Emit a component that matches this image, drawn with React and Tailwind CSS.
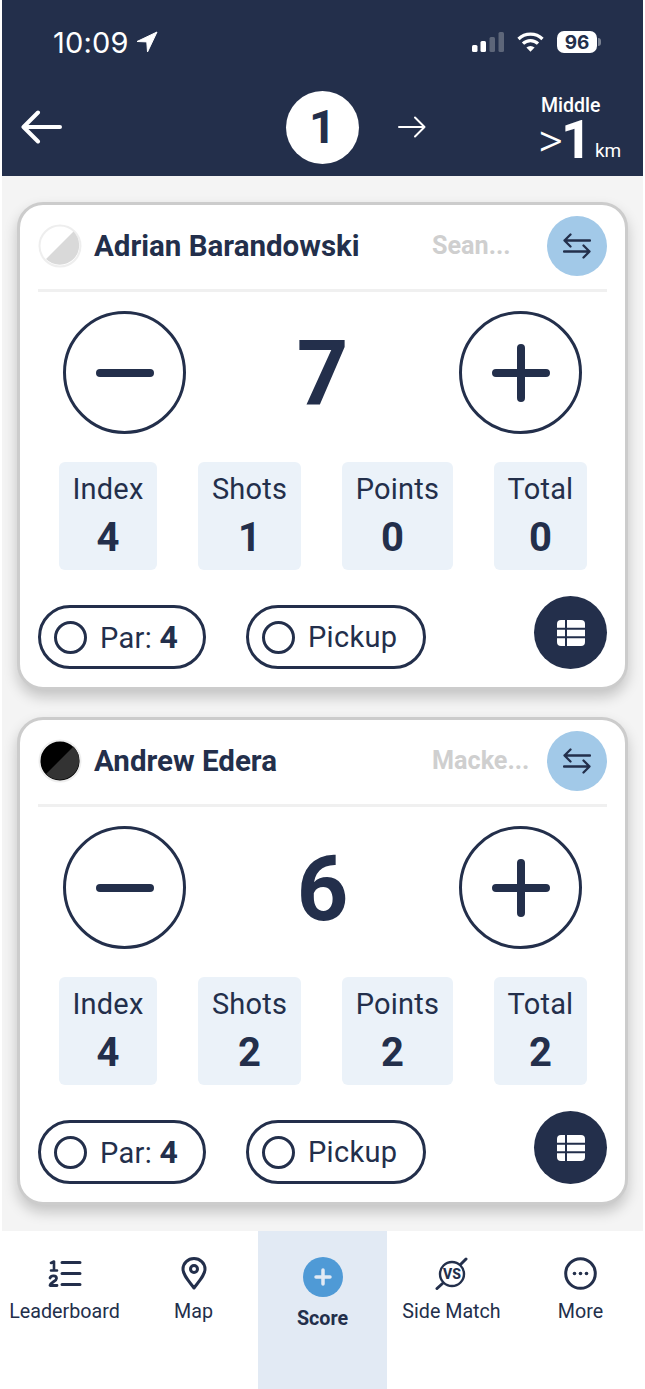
import { Plus } from "lucide-react"

function Stat({ label, value, w, shift }) {
  return (
    <div className={`${w} h-[108px] bg-[#ebf2f9] rounded-md flex flex-col items-center pt-[9px]`}>
      <span className="text-[29px] leading-[36px] tracking-[0.2px]">{label}</span>
      <span className={`text-[40px] leading-[44px] font-bold mt-[9px] ${shift ? "pr-[10px]" : ""}`}>{value}</span>
    </div>
  )
}

function Pill({ w, children }) {
  return (
    <div className={`${w} h-[64px] rounded-full border-[3px] border-[#232f4b] flex items-center pl-[13px]`}>
      <span className="w-[33px] h-[33px] rounded-full border-[3px] border-[#232f4b] shrink-0" />
      <span className="ml-[13px] text-[29px] leading-none tracking-[0.3px]">{children}</span>
    </div>
  )
}

function SwapIcon() {
  return (
    <svg width="28" height="26" viewBox="0 0 28 26" fill="none" stroke="#232f4b" strokeWidth="2.3" strokeLinecap="round" strokeLinejoin="round">
      <path d="M27 7.500H1.500M7.500 1.500l-6 6 6 6" />
      <path d="M1 18.500h25.500M20.500 12.500l6 6-6 6" />
    </svg>
  )
}

function TableIcon() {
  return (
    <svg width="30" height="28" viewBox="0 0 30 28" fill="none">
      <rect x="1" y="1" width="28" height="26" rx="4" fill="white" />
      <path d="M1 9.800h28M1 18.200h28M10 1v26" stroke="#232f4b" strokeWidth="2" />
    </svg>
  )
}

function PlayerCard({ name, tee, score, shots, points, total, dot }) {
  return (
    <div className="w-[611px] h-[488px] ml-[15px] bg-white rounded-[26px] border-[3px] border-[#cccccc] shadow-[0_7px_14px_rgba(0,0,0,0.2)] px-[18px] pt-[11px]">
      <div className="h-[60px] flex items-center">
        {dot}
        <span className="ml-[12px] flex-1 text-[29.500px] font-bold">{name}</span>
        <span className="w-[97px] text-[25.200px] font-bold text-[#cfcfcf]">{tee}</span>
        <button className="ml-[18px] w-[60px] h-[60px] rounded-full bg-[#a2c9e8] flex items-center justify-center">
          <SwapIcon />
        </button>
      </div>
      <div className="h-[3px] bg-[#f0f0f0] mt-[13px]" />
      <div className="mt-[19px] h-[123px] flex items-center px-[25px]">
        <div className="w-[123px] h-[123px] rounded-full border-[3px] border-[#232f4b] flex items-center justify-center">
          <svg width="60" height="60" viewBox="0 0 60 60" stroke="#232f4b" strokeWidth="8" strokeLinecap="round">
            <path d="M5 30h50" />
          </svg>
        </div>
        <div className="flex-1 text-center text-[90px] leading-none font-bold pt-[5px]">{score}</div>
        <div className="w-[123px] h-[123px] rounded-full border-[3px] border-[#232f4b] flex items-center justify-center">
          <svg width="60" height="60" viewBox="0 0 60 60" stroke="#232f4b" strokeWidth="8" strokeLinecap="round">
            <path d="M5 30h50M30 5v50" />
          </svg>
        </div>
      </div>
      <div className="mt-[28px] flex gap-[41px] pl-[21px]">
        <Stat label="Index" value="4" w="w-[98px]" />
        <Stat label="Shots" value={shots} w="w-[103px]" />
        <Stat label="Points" value={points} w="w-[111px]" shift />
        <Stat label="Total" value={total} w="w-[93px]" />
      </div>
      <div className="mt-[26px] flex items-end">
        <Pill w="w-[168px]">Par: <b className="text-[32px]">4</b></Pill>
        <div className="ml-[40px]"><Pill w="w-[180px]">Pickup</Pill></div>
        <button className="ml-auto w-[73px] h-[73px] rounded-full bg-[#232f4b] flex items-center justify-center">
          <TableIcon />
        </button>
      </div>
    </div>
  )
}

function Tab({ label, active, children }) {
  return (
    <div className={`w-[129px] pt-[26px] flex flex-col items-center ${active ? "bg-[#e2eaf4]" : ""}`}>
      <div className={`${active ? "h-[40px]" : "h-[33px]"} flex items-center justify-center`}>{children}</div>
      <span className={`mt-[10px] text-[19.700px] leading-[24px] ${active ? "font-bold" : ""}`}>{label}</span>
    </div>
  )
}

export default function App() {
  return (
    <div className="w-[645px] h-[1389px] bg-white text-[#232f4b] font-['Roboto',sans-serif] overflow-hidden">
      {/* header */}
      <header className="ml-[2px] w-[641px] h-[176px] bg-[#232f4b] text-white">
        <div className="h-[85px] pt-[27px] flex items-start">
          <div className="ml-[51px] flex items-center h-[30px]">
            <span className="text-[29px] font-['Inter',sans-serif] tracking-[0.2px] leading-none">10:09</span>
            <svg className="ml-[7px]" width="22" height="22" viewBox="0 0 22 22" fill="white" stroke="white" strokeWidth="1" strokeLinejoin="round">
              <path d="M21 1 1 10.500l9.800.4.7 10.100z" />
            </svg>
          </div>
          <div className="ml-auto mr-[42px] flex items-center h-[30px]">
            <svg width="32" height="20" viewBox="0 0 32 20">
              <rect x="0" y="13" width="5.500" height="7" rx="1.500" fill="white" />
              <rect x="8.500" y="9" width="5.500" height="11" rx="1.500" fill="white" />
              <rect x="17.500" y="5" width="5.500" height="15" rx="1.500" fill="#5d6679" />
              <rect x="26.500" y="0" width="5.500" height="20" rx="1.500" fill="#5d6679" />
            </svg>
            <svg className="ml-[13px]" width="27" height="20" viewBox="0 0 27 20" fill="none" stroke="white" strokeWidth="3.200">
              <path d="M1.500 7a17 17 0 0 1 24 0" />
              <path d="M6 11.700a10.500 10.500 0 0 1 15 0" />
              <path d="M13.500 19.800 9.400 15.500a6 6 0 0 1 8.200 0z" fill="white" stroke="none" />
            </svg>
            <span className="ml-[13px] w-[40px] h-[22px] rounded-[7px] bg-white text-[#232f4b] text-[19px] font-bold font-['Inter',sans-serif] flex items-center justify-center leading-none">96</span>
            <span className="ml-[1px] w-[3px] h-[8px] rounded-r-full bg-[#7a8292]" />
          </div>
        </div>
        <div className="h-[84px] flex items-center">
          <svg className="ml-[19px]" width="41" height="34" viewBox="0 0 41 34" fill="none" stroke="white" strokeWidth="4" strokeLinecap="round" strokeLinejoin="round">
            <path d="M39 17H3M17 2.500 2.500 17 17 31.500" />
          </svg>
          <div className="ml-[224px] w-[73px] h-[73px] rounded-full bg-white text-[#232f4b] text-[47px] font-bold flex items-center justify-center">1</div>
          <svg className="ml-[39px]" width="28" height="22" viewBox="0 0 28 22" fill="none" stroke="white" strokeWidth="2" strokeLinecap="round" strokeLinejoin="round">
            <path d="M1 11h25.500M17 1.500 26.500 11 17 20.500" />
          </svg>
          <div className="ml-auto mr-[20px] w-[82px] mt-[4px] flex flex-col">
            <span className="text-[19.500px] leading-[22px] font-medium">Middle</span>
            <div className="flex items-end h-[46px]">
              <span className="text-[48px] leading-[44px] font-light ml-[-3px]">&gt;</span>
              <span className="text-[54px] leading-[46px] font-bold ml-[-2px]">1</span>
              <span className="ml-[3px] text-[19px] leading-[24px]">km</span>
            </div>
          </div>
        </div>
      </header>

      <main className="ml-[2px] w-[641px] h-[1055px] bg-[#f4f4f4] pt-[26px] flex flex-col gap-[27px]">
        <PlayerCard
          name="Adrian Barandowski"
          tee="Sean..."
          score="7"
          shots="1"
          points="0"
          total="0"
          dot={
            <svg width="44" height="44" viewBox="0 0 44 44" className="shrink-0">
              <circle cx="22" cy="22" r="20.500" fill="white" stroke="#eeeeee" strokeWidth="2" />
              <path d="M35.500 7.500A19 19 0 0 1 8 35z" fill="#d9d9d9" />
            </svg>
          }
        />
        <PlayerCard
          name="Andrew Edera"
          tee="Macke..."
          score="6"
          shots="2"
          points="2"
          total="2"
          dot={
            <svg width="44" height="44" viewBox="0 0 44 44" className="shrink-0">
              <circle cx="22" cy="22" r="20.500" fill="black" stroke="#eeeeee" strokeWidth="2" />
              <path d="M35.500 7.500A19 19 0 0 1 8 35z" fill="#333333" />
            </svg>
          }
        />
      </main>

      {/* tab bar */}
      <nav className="h-[158px] flex">
        <Tab label="Leaderboard">
          <svg width="34" height="27" viewBox="0 0 34 27" fill="none" stroke="#232f4b" strokeLinecap="round">
            <path d="M14 2.500h18M14 13.500h18M14 24.500h18" strokeWidth="3" />
            <path d="M3 3 6 1.500V10M3 10.500h6" strokeWidth="2.600" strokeLinejoin="round" />
            <path d="M2 18c1-3 6.500-3 6.500.5 0 2.500-5.500 3.500-6.500 7h7" strokeWidth="2.800" strokeLinejoin="round" />
          </svg>
        </Tab>
        <Tab label="Map">
          <svg width="26" height="33" viewBox="0 0 26 33" fill="none" stroke="#232f4b" strokeWidth="3">
            <path d="M13 31C7 23 2 18 2 12a11 10.500 0 0 1 22 0c0 6-5 11-11 19z" strokeLinejoin="round" />
            <circle cx="13" cy="12" r="3.500" />
          </svg>
        </Tab>
        <Tab label="Score" active>
          <div className="w-[40px] h-[40px] rounded-full bg-[#4f9ad6] flex items-center justify-center">
            <Plus size={24} color="#e2eaf4" strokeWidth={3.500} />
          </div>
        </Tab>
        <Tab label="Side Match">
          <svg width="34" height="33" viewBox="0 0 34 33" fill="none" stroke="#232f4b">
            <circle cx="17" cy="17" r="12" strokeWidth="2.400" />
            <path d="M26 7l5-5M7.500 26.500l-5.500 5" strokeWidth="3" strokeLinecap="round" />
            <text x="17" y="22" textAnchor="middle" fontSize="14" fontWeight="800" fontFamily="Roboto, sans-serif" fill="#232f4b" stroke="none">VS</text>
          </svg>
        </Tab>
        <Tab label="More">
          <svg width="33" height="33" viewBox="0 0 33 33" fill="none">
            <circle cx="16.500" cy="16.500" r="14.800" stroke="#232f4b" strokeWidth="3" />
            <circle cx="10.500" cy="16.500" r="1.800" fill="#232f4b" />
            <circle cx="16.500" cy="16.500" r="1.800" fill="#232f4b" />
            <circle cx="22.500" cy="16.500" r="1.800" fill="#232f4b" />
          </svg>
        </Tab>
      </nav>
    </div>
  )
}
